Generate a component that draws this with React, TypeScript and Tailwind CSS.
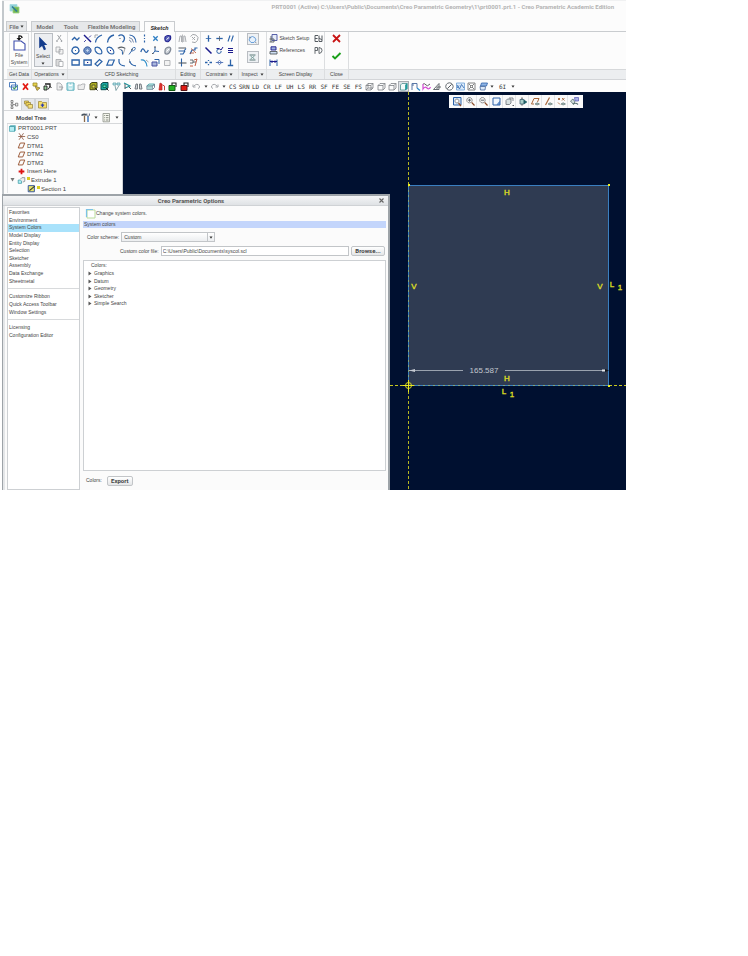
import { useState } from 'react'
import clsx from 'clsx'

// [path, stroke, fill, stroke width]
type Stroke = [string, string, string?, number?]

const B = '#2b62a8'
const N = '#1b1b8c'
const G = '#a3a6aa'
const K = '#555b61'
const T = '#1f8f96'
const O = '#a8663a'

const ICONS: Record<string, Stroke[]> = {
  // sketching
  lineChain: [['M2 7 L4.5 4.5 L7 7 L9.5 4.5', B, 'none', 1.3]],
  centerline: [['M2 2 L9 9', N, 'none', 1.4], ['M9 2.5 L7 4.5 M2 9 L4 7', N, 'none', 0.8]],
  lineTangent: [['M2.5 9.5 Q3 4 9 2', B, 'none', 1.2], ['M2 2 H5 M2 2 V5', G]],
  arc: [['M2.5 9.5 Q3 3.5 9 2', B, 'none', 1.3]],
  arcCenter: [['M2.5 3 Q5 0.8 7.6 3 Q9.8 6 6.5 9.2', B, 'none', 1.3], ['M3 5.5 H5', G]],
  arcConcentric: [['M2.5 2 Q8.5 2.5 9 9.5', B, 'none', 1.1], ['M2 4.5 Q6 5 6.5 9.5 M2 7 Q4 7.5 4.2 9.5', '#6d7fa0', 'none', 0.9]],
  axis: [['M5.5 1.5 V3.5 M5.5 5 V6 M5.5 7.5 V9.5', B, 'none', 1.2]],
  point: [['M3.3 3.3 L7.7 7.7 M7.7 3.3 L3.3 7.7', '#2f7fc4', 'none', 1.3]],
  offset: [['M3 4 Q5 1.5 8.5 3 Q9.5 7 6 8.8 Q2 9 3 4 Z', N, '#5a63b8', 1.1], ['M4.5 6.5 L7 4.5', '#fff']],
  circle: [['M5.5 2 A3.5 3.5 0 1 1 5.4 2 Z', B, 'none', 1.3], ['M5 5.5 H6', B]],
  circleFill: [['M5.5 1.8 A3.7 3.7 0 1 1 5.4 1.8 Z', '#2a4f96', '#6f90c4', 0.9], ['M4 5.5 H7 M5.5 4 V7', '#d4e2f5', 'none', 0.7]],
  ellipse: [['M2.5 2.5 Q6 1 8.3 5 Q10 9 7 9 Q4 9 2.4 6 Q1.5 3.5 2.5 2.5 Z', B, 'none', 1.2]],
  ellipseDot: [['M2.5 2.5 Q6 1 8.3 5 Q10 9 7 9 Q4 9 2.4 6 Q1.5 3.5 2.5 2.5 Z', B, 'none', 1.1], ['M5 5.5 H6', N]],
  fan: [['M1.8 3.2 Q6 0.8 9.2 3.5', K, 'none', 1.1], ['M2.5 3.5 L7 6 M9 3.5 L7 9.5', G], ['M5 4.5 Q7 6 6.5 9.5', B]],
  conic: [['M2 9.5 L4.5 6 Q5 2 8 2.5 Q9.5 5 4.5 6.2', B, 'none', 0.9], ['M6 4 L4 5', K]],
  spline: [['M1.8 7 Q3.5 1.5 5.5 5.5 T9.3 5', B, 'none', 1.3]],
  csys: [['M5 2 V6 M5 6 L9 6.5 M5 6 L2.5 9', B, 'none', 1], ['M4 2 H6 M2 8.5 H3.5', K]],
  ring: [['M3 6 Q3 2.5 7 2 Q9.5 2.5 8.5 5.5 Q7 9.5 4 9 Q2.5 8.5 3 6 Z', '#7e8794', '#cdd2d8', 1.2], ['M4.5 6.5 L7 4', '#fff']],
  rect: [['M2 3 H9.2 V8 H2 Z', B, 'none', 1.3]],
  rectDot: [['M2 3 H9.2 V8 H2 Z', B, 'none', 1.3], ['M5 5.5 H6.2', N]],
  slantRect: [['M2 7 L6.5 2.5 L9 4.5 L4.5 9 Z', B, 'none', 1.2]],
  parallelogram: [['M1.8 8.2 L4 3 H9.3 L7.2 8.2 Z', B, 'none', 1.2]],
  fillet: [['M3 2 V5 Q3.5 8.5 9 9', B, 'none', 1.2]],
  filletDot: [['M2.5 2 V6', G], ['M2.8 4 Q3.5 8.5 9 8.8', B, 'none', 1.2]],
  chamfer: [['M1.8 3 Q7 2 8 9.5', '#2f8ec9', 'none', 1.2], ['M7 3 L9.5 5', G]],
  thicken: [['M2 5 H7 V9 H2 Z', '#46509f', '#a9b6dc'], ['M4.5 2.5 H9 V7', B]],
  palette: [['M2.5 3.5 H8 V8.5 H2.5 Z', G, '#f2f2f2', 0.8]],
  // editing
  mirror: [['M5.5 1.5 V9.5', G, 'none', 0.8], ['M2 9 L3 3 L4.5 3 V9 M9 9 L8 3 H6.8 V9', G, 'none', 0.9]],
  rotate: [['M2.5 3.5 A4 4 0 1 1 4 9', G, 'none', 1], ['M4 4 L7 7 M7 4 L4.5 6.5', G]],
  modify: [['M1.5 3 H9', K, 'none', 1], ['M1.5 6 H7 L9 3.5 M3 9 H6 L8 6', B, 'none', 1.2]],
  trim: [['M2 9 L4 5 H7 V3 H9.5', B, 'none', 1.2], ['M3 3.5 L8 8 M2 8 H6', '#b34a2a', 'none', 0.8]],
  corner: [['M4.5 1.5 V9.5', B, 'none', 1.1], ['M1.5 6 H9.5', K, 'none', 1.1]],
  divide: [['M2 3 H5 V6 H2 M5 5 H8', K, 'none', 0.9], ['M6 3 L9 2 L7 9 M2 9 H5', '#c0492d', 'none', 0.9]],
  // constrain
  cVert: [['M5.5 2.3 V8.7', B, 'none', 1.3], ['M2.8 5.5 H8.2', B, 'none', 0.8]],
  cHoriz: [['M2.3 5.5 H8.7', B, 'none', 1.3], ['M5.5 3 V8', K, 'none', 0.8]],
  cPar: [['M3 8.5 L5 2.5 M6.3 8.5 L8.3 2.5', B, 'none', 1.1]],
  cMid: [['M2.5 2.5 L8.5 8.5', N, 'none', 1.5]],
  cTan: [['M5 4 A2.2 2.2 0 1 0 7.2 6', B, 'none', 1], ['M2.5 3.5 H5 L7 5 L9 2', N, 'none', 1]],
  cEq: [['M3 3.5 H8 M3 5.5 H8 M3 7.5 H8', N, 'none', 1]],
  cSym: [['M2 5.5 H4.5 M6.5 5.5 H9 M5.5 3 V4 M5.5 7 V8.2', B, 'none', 1.3]],
  cCoin: [['M5.5 3.3 L7.7 5.5 L5.5 7.7 L3.3 5.5 Z M1.8 5.5 H9.2', '#4d6fb4', 'none', 0.9]],
  cPerp: [['M5.5 2.5 V8.5 M2.8 8.5 H8.2', B, 'none', 1.3]],
  // clipboard
  cut: [['M3.5 2 L7 7 M7 2 L3.8 7', G, 'none', 1], ['M3 7 V9 M7.5 7 V9', G, 'none', 1.3]],
  copy: [['M2 2 H6 V7 H2 Z M5 4.5 H9 V9 H5 Z', G, '#f3f3f3', 0.8]],
  paste: [['M2 2.5 H7 V9 H2 Z', G, '#dcdcdc', 0.8], ['M5 4.5 H9 V9.5 H5 Z', G, '#fff', 0.8]],
  // screen display
  setup: [['M4 1.5 H9 V7.5 H4 Z', '#46509f', '#e8edf7', 0.9], ['M1.5 6 H6 V9 H1.5 M3 3 V9', K, 'none', 0.9]],
  refs: [['M3 1.8 H8 V5 H3 Z', N, '#9fb0dd', 0.9], ['M2 6.5 H9 V9 H2 Z', K, '#cfe0f5', 0.9]],
  width: [['M2 2.5 V9 M9 2.5 V9', B, 'none', 1], ['M2 4.5 H9 M4 3.5 V6 M7 3.5 V6', N, 'none', 1]],
  feature: [['M2 6 Q2.5 2.5 5.5 2.5 Q8.5 3 9 6 L7 8.5 H4 Z', '#5f98d8', '#e7f1fb', 0.9], ['M2 3 L4 4 M8 8 L9.5 9', K, 'none', 0.6]],
  shade: [['M2.5 3 H8.5 M2.5 8 H8.5', '#5f7d7b', 'none', 1], ['M3.5 4 L7.5 7 M7.5 4 L3.5 7', '#79a09c']],
  ew: [['M2 2.5 H5 M2 5.5 H4.5 M2 8.5 H5 M2 2.5 V8.5', K, 'none', 1], ['M6 2.5 V8.5 H9 V2.5 M6 5 L9 7', K, 'none', 1]],
  pd: [['M2 8.8 V2.5 H4.5 V5.5 H2', K, 'none', 0.9], ['M6 8.5 V2.5 Q9.5 3 9 5.5 Q9 8 6 8.5', K, 'none', 0.9]],
  // quick toolbar
  windows: [['M1.5 1.5 H7.5 V6 H1.5 Z M3.5 4 H9.5 V9 H3.5 Z', '#3f73b8', '#fff', 0.9], ['M5 6.5 L6.3 8 L9 5', '#3a9a50', 'none', 1.1]],
  del: [['M3 2.5 L8 8.8 M8 2.5 L3 8.8', '#e31b12', 'none', 1.8]],
  regen: [['M2 2 H6 V5 H2 Z', '#9b8b2a', '#e8d24a', 0.8], ['M4 5 L9 7 L6 9.5 Z', '#86763c', '#d6b83c', 0.8]],
  refresh: [['M3 3 H8 V6', '#222', 'none', 1.3], ['M2 5 H5 V9 H2 Z', '#1b1b1b', '#9ad09d', 0.9], ['M6 8.5 L8 5.5 L9.5 7', '#222']],
  newDoc: [['M3 2 H6 L8 4 V9 H3 Z', G, '#eee', 0.8], ['M5 6 H9 L7 9', G]],
  save: [['M2 2 H9 V9.2 H2 Z', '#5aaebb', '#bfe7ec', 1], ['M4 2.3 V4.5 H7 V2.3 M4 8 H7', '#fff', 'none', 1]],
  open: [['M2 4 H5 L6 3 H9 L8 8.5 H2 Z', G, '#ededed', 0.8]],
  boxYellow: [['M2 3 L4 1.5 H9 V7 L7 8.7 H2 Z', '#4a4a1a', '#b0b020', 1], ['M4 4 H7 V7 H4 Z', '#443', '#e6e03a', 0.8], ['M7 7 L9.5 9.5', '#222']],
  boxTeal: [['M2 3 L4 1.5 H9 V7 L7 8.7 H2 Z', '#0f4a4a', '#1aa6a6', 1], ['M4 4 H7 V6.5 H4 Z', '#063', '#59d8d0', 0.8], ['M7 7 L9.5 9.5', '#222']],
  tree: [['M2 2 H5 V4 H2 Z M6 2 H9 V4 H6 Z', '#4a9aa5', '#c8eaee', 0.7], ['M4 4.5 L5 9.5 L8 4.5', '#6a8f95', 'none', 0.8]],
  tree2: [['M2 2 L8 5 L3 7', T, 'none', 1.1], ['M3 3 V8 M7 6 L9 8', K]],
  find: [['M2 8 L3 3 H4.5 V8 Z M9 8 L8 3 H6.5 V8 Z', '#6a7076', '#d7dade', 0.9]],
  plate: [['M1.8 5 L4 3 H9.5 L7.5 5 Z', T, '#d7f0ee', 0.7], ['M1.8 5 H7.5 V8.5 H1.8 Z', '#789', '#a8d5d3', 0.7], ['M7.5 5 L9.5 3 V6.5 L7.5 8.5', '#789']],
  redMark: [['M3 9 L4 2 L6 3 V9 Z', '#b9231e', '#e3322b', 0.7], ['M6.5 4 L8.5 5 V9.3', '#c8413a']],
  lockGreen: [['M5 5 V2 H9 V6', '#222', 'none', 1.1], ['M2 4.5 H8 V9.5 H2 Z', '#145a14', '#22b022', 1]],
  lockRed: [['M5 5 V2 H9 V6', '#222', 'none', 1.1], ['M2 4.5 H8 V9.5 H2 Z', '#5a1414', '#e01c14', 1]],
  undo: [['M2.5 5.5 Q6 1.5 8.5 5 Q9 7 7 7.5', G, 'none', 1], ['M2 3.5 V6 H4.5', G]],
  redo: [['M8.5 5.5 Q5 1.5 2.5 5 Q2 7 4 7.5', G, 'none', 1], ['M9 3.5 V6 H6.5', G]],
  cube: [['M2 4.5 L4 2.5 H9 V7 L7 9 H2 Z M2 4.5 H7 V9 M7 4.5 L9 2.5', '#7d8186', '#fbfbfb', 0.8]],
  cubeWire: [['M2 4.5 L4 2.5 H9 V7 L7 9 H2 Z M2 4.5 H7 V9 M7 4.5 L9 2.5 M4 2.5 V7 H9 M4 7 L2 9', '#6d7176', 'none', 0.7]],
  cubeSolid: [['M2.5 4 L4 2.5 H9 V7.5 L7.5 9 H2.5 Z', '#4f8f90', '#f2fbfa', 0.8], ['M7.5 4 L9 2.5 V7.5 L7.5 9 Z', T, '#1aa6a0', 0.7]],
  dims: [['M2 9 V2.5 H7 V7 M2 4 H4', '#46689c', 'none', 0.9], ['M7 7 L10 9.5', '#2b8acb', 'none', 1.3]],
  curve: [['M2 3 Q4 2 5 4 T9 3', '#555', 'none', 0.9], ['M2 3 V8 Q4 5 6 7 T9.5 6', '#d24bd2', 'none', 1.2]],
  angle: [['M1.5 8.5 L7 2.5 V8.5 Z', K, 'none', 0.9], ['M5 8 V6 H9', K, 'none', 0.9]],
  forbid: [['M5.5 1.8 A3.7 3.7 0 1 1 5.4 1.8 Z', K, 'none', 0.9], ['M3.3 7.7 L7.7 3.3', K, 'none', 1]],
  graph: [['M1.5 2 H9.5 V9 H1.5 Z', '#6b9fd6', '#dcebfa', 0.8], ['M2 4 L4.5 8 L6.5 3.5 L9 7 M2 7 L4 4.5', '#3c70b4', 'none', 0.9]],
  grid: [['M2 2 H9 V9 H2 Z', '#666', 'none', 0.8], ['M3 3 L8 8 M8 3 L3 8', '#666', 'none', 0.8], ['M4.5 4.5 H6.5 V6.5 H4.5 Z', '#666', '#fff', 0.7]],
  layers: [['M3.5 2 H9.5 L8.5 5 H2.5 Z', '#2f62a9', '#8fb5e5', 0.8], ['M2 5.5 H7.5 L7 9 H2.5 Z', '#46689c', '#dbe8f7', 0.8]],
  // view toolbar
  refit: [['M1.5 1.5 H9 V9 H1.5 Z', B, '#d9e8fa', 1], ['M5 3 A2 2 0 1 1 4.9 3 Z', '#777', '#fff', 0.8], ['M6.5 7 L9 10', '#8a4b28', 'none', 1.2]],
  zoomIn: [['M4.5 1.5 A2.7 2.7 0 1 1 4.4 1.5 Z', '#777', '#f4f4f4', 0.8], ['M3 4.2 H6 M4.5 2.8 V5.7', K, 'none', 0.9], ['M6.6 6.4 L9.5 9.5', '#8a4b28', 'none', 1.2]],
  zoomOut: [['M4.5 1.5 A2.7 2.7 0 1 1 4.4 1.5 Z', '#777', '#f4f4f4', 0.8], ['M3 4.2 H6', K, 'none', 0.9], ['M6.6 6.4 L9.5 9.5', '#8a4b28', 'none', 1.2]],
  repaint: [['M2 2 H9 V9 H2 Z', '#2f62a9', '#f2f8fe', 1], ['M6 8.5 L8.5 5.5 V8.5 Z', '#2f62a9', '#6a9bda', 0.5]],
  style: [['M2 4.5 L3.5 3 H7 V7 L5.5 8.5 H2 Z', '#6a7076', '#d9e2e2', 0.8], ['M5 2 H9 V5', '#6a7076', 'none', 0.8], ['M8.5 9.5 H10', K]],
  views: [['M5 1.5 V9.5', '#333', 'none', 1], ['M3 3.5 H7 V8 H3 Z', '#467', '#a9cfc9', 0.8], ['M7 4 L10 6 L7 8 Z', '#1d5f66', '#1d5f66', 0.5]],
  planeOff: [['M1.5 8 L4 2.5 H9 L7.5 6 M1.5 8 H4', O, 'none', 1], ['M5 8 Q7 5.5 9.5 8 Q7 10 5 8 Z', '#5d7473', '#9fb3b0', 0.6]],
  axisOff: [['M2.5 9 L6.5 1.5', O, 'none', 1.2], ['M5 8 Q7 5.5 9.5 8 Q7 10 5 8 Z', '#5d7473', '#9fb3b0', 0.6]],
  pointOff: [['M2 2 L4 4 M4 2 L2 4 M6 2 L8.5 4.5 M8.5 2 L6 4.5 M2 6.5 L4 8.5', O, 'none', 0.9], ['M5 8 Q7 5.5 9.5 8 Q7 10 5 8 Z', '#5d7473', '#9fb3b0', 0.6]],
  csysOff: [['M1.5 5 L4 3 L6 6 L4 8 Z', '#5d7473', '#cfdcda', 0.8], ['M5.5 1.5 H9.5 V5 H6 Z', '#5457b0', '#a9aee6', 0.7], ['M4 8.5 Q6.5 6 9 8.5', '#5d7473', 'none', 1.1]],
  // model tree
  treeTab: [['M2 1.5 H4 V3.5 H2 Z M2 4.7 H4 V6.5 H2 Z M2 7.7 H4 V9.5 H2 Z', '#666', '#eee', 0.7], ['M6.5 4.2 H8.8 V7 H6.5 Z M4 5.6 H6', '#666', '#eee', 0.7]],
  folders: [['M1.5 2 H5.5 V5 H1.5 Z', '#94803a', '#f1d659', 0.7], ['M3 3.5 H7.5 V7 H3 Z', '#94803a', '#f1d659', 0.7], ['M5 5.5 H9.5 V9.2 H5 Z', '#94803a', '#f6e17a', 0.7]],
  favorites: [['M1.5 2.5 H4.5 L5.5 3.5 H9.5 V9 H1.5 Z', '#a18a3a', '#f5df6a', 0.8], ['M5.5 4.5 V8 M3.8 6.2 H7.2', '#2f3fae', 'none', 1.3]],
  tools: [['M4.5 3.5 V10', '#8a6a4a', 'none', 1.3], ['M1.5 3.5 Q4 1.5 6.5 3', '#4a5560', 'none', 1.6], ['M8 4.5 V10', '#3f78c2', 'none', 1.5], ['M6.8 1.5 V3.5 L8 4.5 L9.4 3.5 V1.5', '#5d6a80', 'none', 1]],
  listDoc: [['M2 1.5 H8.5 V9.8 H2 Z', '#8b8f86', '#f6f7ee', 0.8], ['M3.2 3.5 H4.2 M5 3.5 H7.5 M3.2 5.7 H4.2 M5 5.7 H7.5 M3.2 8 H4.2 M5 8 H7.5', '#6c7068', 'none', 0.8]],
  part: [['M1.8 3 L3 2 H9 V8 L8 9 H1.8 Z', '#4ba7b1', '#b3ecf2', 0.9], ['M8 3 V9 M1.8 3 H8', '#2b8a95', 'none', 0.9]],
  csTree: [['M2.5 1.5 L8 9.5 M8 1.5 L2.5 9.5 M1.5 5.5 H10', '#8c5640', 'none', 1]],
  plane: [['M1.5 8.5 L4 2.5 H9.5 L7 8.5 Z', '#9b5a38', 'none', 1.2]],
  insert: [['M5.5 2 V9 M2 5.5 H9', '#dd1414', 'none', 2.2]],
  extrude: [['M1.5 5 H5.5 V9 H1.5 Z', '#3b9aa3', '#b3ecf2', 0.9], ['M4 4 L6 2 H9.5 V6.5 L7 7.5', '#66727a', '#eee', 0.8]],
  section: [['M1.5 2 H9 V9.5 H1.5 Z', '#274a9c', '#e8e46a', 1.1], ['M3 8 L9.5 2.5', '#333', 'none', 1.3]],
  // dialog
  swatch: [['M2 2 H10 V10 H2 Z', '#b9dc9b', '#fff', 1], ['M1.5 9 V1.5 H8', '#7cc2e6', 'none', 1.2]],
  logo: [['M1 1.5 H8 V8 H1 Z', '#a6dbe0', '#8fd0d8', 0.8], ['M4 4 H10 V10 H4 Z', '#9ed08c', '#72b84e', 0.8], ['M3 3.5 L8 8.5', '#2d7a9a', 'none', 1.6]],
}

function Icon({ name, className = 'w-[11px] h-[11px]' }: { name: string; className?: string }) {
  return (
    <svg viewBox="0 0 11 11" className={clsx('block shrink-0', className)} aria-hidden="true">
      {ICONS[name].map(([d, stroke, fill, w], i) => (
        <path key={i} d={d} stroke={stroke} fill={fill ?? 'none'} strokeWidth={w ?? 1} />
      ))}
    </svg>
  )
}

function IconButton({ name, className }: { name: string; className?: string }) {
  return (
    <button aria-label={name} className={clsx('flex items-center justify-center', className)}>
      <Icon name={name} />
    </button>
  )
}

function Caret() {
  return (
    <svg viewBox="0 0 4 3" className="block w-1 h-[3px] shrink-0" aria-hidden="true">
      <path d="M0.5 0.5 H3.5 L2 2.7 Z" fill="#333" />
    </svg>
  )
}

const CFD = [
  'lineChain', 'centerline', 'lineTangent', 'arc', 'arcCenter', 'arcConcentric', 'axis', 'point', 'offset',
  'circle', 'circleFill', 'ellipse', 'ellipseDot', 'fan', 'conic', 'spline', 'csys', 'ring',
  'rect', 'rectDot', 'slantRect', 'parallelogram', 'fillet', 'filletDot', 'chamfer', 'thicken', 'palette',
]
const EDITING = ['mirror', 'rotate', 'modify', 'trim', 'corner', 'divide']
const CONSTRAIN = ['cVert', 'cHoriz', 'cPar', 'cMid', 'cTan', 'cEq', 'cSym', 'cCoin', 'cPerp']
const QUICK = [
  'windows', 'del', 'regen', 'refresh', 'newDoc', 'save', 'open', 'boxYellow',
  'boxTeal', 'tree', 'tree2', 'find', 'plate', 'redMark', 'lockGreen', 'lockRed',
]
const VIEW_KEYS = ['CS', 'SRN', 'LD', 'CR', 'LF', 'UH', 'LS', 'RR', 'SF', 'FE', 'SE', 'FS']
const DISPLAY = ['cubeWire', 'cube', 'cube', 'cubeSolid', 'dims', 'curve', 'angle', 'forbid', 'graph', 'grid', 'layers']
const GRAPHICS_BAR = ['refit', 'zoomIn', 'zoomOut', 'repaint', 'style', 'views', 'planeOff', 'axisOff', 'pointOff', 'csysOff']

const OPTION_GROUPS = [
  {
    items: ['Favorites', 'Environment', 'System Colors', 'Model Display', 'Entity Display', 'Selection', 'Sketcher', 'Assembly', 'Data Exchange', 'Sheetmetal'],
    height: 'h-[76px]',
  },
  { items: ['Customize Ribbon', 'Quick Access Toolbar', 'Window Settings'], height: 'h-[23px]' },
  { items: ['Licensing', 'Configuration Editor'], height: 'h-[15px]' },
]

const TREE = [
  { icon: 'part', label: 'PRT0001.PRT', indent: 'pl-0' },
  { icon: 'csTree', label: 'CS0', indent: 'pl-[9px]' },
  { icon: 'plane', label: 'DTM1', indent: 'pl-[9px]' },
  { icon: 'plane', label: 'DTM2', indent: 'pl-[9px]' },
  { icon: 'plane', label: 'DTM3', indent: 'pl-[9px]' },
  { icon: 'insert', label: 'Insert Here', indent: 'pl-[9px]' },
  { icon: 'extrude', label: 'Extrude 1', indent: 'pl-[2px]', open: true, mark: true },
  { icon: 'section', label: 'Section 1', indent: 'pl-[19px]', mark: true },
]

function RibbonGroup({ label, width, menu, children }: { label: string; width: string; menu?: boolean; children: React.ReactNode }) {
  return (
    <section className={clsx('flex flex-col shrink-0 border-r border-[#dcdee0]', width)}>
      <div className="h-[37px] flex justify-center items-start pt-px">{children}</div>
      <div className="h-[10px] bg-[#eceef0] border-t border-[#e2e4e6] flex items-center justify-center gap-[2px] whitespace-nowrap">
        {label}
        {menu && <Caret />}
      </div>
    </section>
  )
}

function Ribbon() {
  return (
    <div className="flex border-t border-[#c9cccf] bg-[#fcfcfc] pl-[3px]">
      <RibbonGroup label="Get Data" width="w-[25px]">
        <button className="w-[20px] h-[34px] border border-[#dcdee0] flex flex-col items-center leading-[7px]">
          <svg viewBox="0 0 16 18" className="w-4 h-[18px] shrink-0">
            <path d="M3 7 H10 L14 10 V16 H3 Z" fill="#fff" stroke="#3f4fae" strokeWidth="1.1" />
            <path d="M11 4 Q11 1.5 8 2 V5" fill="none" stroke="#111" strokeWidth="1.4" />
            <path d="M5.5 4 H10.5 L8 6.8 Z" fill="#111" />
          </svg>
          File<br />System
        </button>
      </RibbonGroup>
      <RibbonGroup label="Operations" width="w-[36px]" menu>
        <button className="w-[19px] h-[34px] border border-[#b9bdc2] bg-[#eceef1] flex flex-col items-center leading-[7px]">
          <svg viewBox="0 0 14 20" className="w-[14px] h-[19px] shrink-0">
            <path d="M3 3 L11.5 11.5 H8.3 L10.2 16 L8 17 L6 12.5 L3 15 Z" fill="#143c8c" />
          </svg>
          Select
          <span className="pt-[2px]"><Caret /></span>
        </button>
        <div className="flex flex-col gap-px">
          {['cut', 'copy', 'paste'].map(n => <IconButton key={n} name={n} className="w-[13px] h-[11px]" />)}
        </div>
      </RibbonGroup>
      <RibbonGroup label="CFD Sketching" width="w-[108px]">
        <div className="grid grid-cols-9 w-[103px] gap-y-px">
          {CFD.map(n => <IconButton key={n} name={n} />)}
        </div>
      </RibbonGroup>
      <RibbonGroup label="Editing" width="w-[25px]">
        <div className="grid grid-cols-2 w-[23px] gap-y-px">
          {EDITING.map(n => <IconButton key={n} name={n} />)}
        </div>
      </RibbonGroup>
      <RibbonGroup label="Constrain" width="w-[38px]" menu>
        <div className="grid grid-cols-3 w-[34px] gap-y-px">
          {CONSTRAIN.map(n => <IconButton key={n} name={n} />)}
        </div>
      </RibbonGroup>
      <RibbonGroup label="Inspect" width="w-[28px]" menu>
        <div className="flex flex-col gap-[6px]">
          <IconButton name="feature" className="w-[12px] h-[12px] border border-[#b9bdc2] bg-[#eef1f4]" />
          <IconButton name="shade" className="w-[12px] h-[12px] border border-[#b9bdc2] bg-[#eef1f4]" />
        </div>
      </RibbonGroup>
      <RibbonGroup label="Screen Display" width="w-[58px]">
        <div className="w-[56px] flex flex-col gap-px">
          <div className="flex items-center">
            <button className="flex-1 flex items-center gap-px whitespace-nowrap"><Icon name="setup" />Sketch Setup</button>
            <IconButton name="ew" />
          </div>
          <div className="flex items-center">
            <button className="flex-1 flex items-center gap-px"><Icon name="refs" />References</button>
            <IconButton name="pd" />
          </div>
          <IconButton name="width" className="w-[11px]" />
        </div>
      </RibbonGroup>
      <RibbonGroup label="Close" width="w-[24px]">
        <div className="flex flex-col gap-[6px]">
          <button aria-label="Cancel">
            <svg viewBox="0 0 11 11" className="block w-[11px] h-[11px]"><path d="M2 2 L9 9 M9 2 L2 9" stroke="#c81414" strokeWidth="1.8" /></svg>
          </button>
          <button aria-label="OK">
            <svg viewBox="0 0 11 11" className="block w-[11px] h-[11px]"><path d="M1.5 6 L4 8.5 L9.5 3" fill="none" stroke="#1aa01a" strokeWidth="1.9" /></svg>
          </button>
        </div>
      </RibbonGroup>
      <div className="flex-1 flex flex-col justify-end">
        <div className="h-[10px] bg-[#eceef0] border-t border-[#d6d8da]" />
      </div>
    </div>
  )
}

function QuickToolbar() {
  return (
    <div className="h-[13px] flex items-center bg-[#fdfdfd] border-t border-[#d3d5d8] pl-[4px]">
      <div className="grid grid-cols-16 w-[182px]">
        {QUICK.map(n => <IconButton key={n} name={n} />)}
      </div>
      <div className="flex items-center justify-around w-[37px]">
        <IconButton name="undo" />
        <Caret />
        <IconButton name="redo" />
        <Caret />
      </div>
      <div className="grid grid-cols-12 w-[137px] font-['DejaVu_Sans_Mono',monospace] text-[6px] text-[#333]">
        {VIEW_KEYS.map(k => (
          <button key={k} className="flex justify-center">{k}</button>
        ))}
      </div>
      <div className="grid grid-cols-11 w-[125px]">
        {DISPLAY.map((n, i) => (
          <IconButton key={i} name={n} className={n === 'cubeSolid' ? 'bg-[#dfe3e7] outline outline-[#a9adb2] -outline-offset-1' : ''} />
        ))}
      </div>
      <div className="flex items-center gap-[5px] pl-px font-['DejaVu_Sans_Mono',monospace] text-[6px] text-[#333]">
        <Caret />
        <button>6I</button>
        <Caret />
      </div>
    </div>
  )
}

function ModelTree() {
  return (
    <aside className="w-[119px] shrink-0 bg-[#fcfcfc] border-r border-[#d0d3d6] pt-[6px] text-[6px]">
      <div className="flex h-[13px] border-b border-[#d6d8da] pl-[3px]">
        <IconButton name="treeTab" className="w-[14px]" />
        <IconButton name="folders" className="w-[14px] border border-b-0 border-[#d0d3d6] bg-[#e6e8ea]" />
        <IconButton name="favorites" className="w-[14px] border border-b-0 border-[#d0d3d6] bg-[#e6e8ea]" />
      </div>
      <div className="flex items-center h-[13px] border-b border-[#d6d8da] ml-[3px] pl-[9px] pr-[3px] gap-[3px]">
        <h2 className="flex-1 font-['Roboto',sans-serif] font-bold whitespace-nowrap text-[#555]">Model Tree</h2>
        <IconButton name="tools" />
        <Caret />
        <IconButton name="listDoc" />
        <Caret />
      </div>
      <ul className="grid grid-rows-8 h-[69px] ml-[3px] border-l border-[#e2e4e6]">
        {TREE.map(row => (
          <li key={row.label} className={clsx('flex items-center whitespace-nowrap leading-[8px]', row.indent)}>
            {row.open && (
              <svg viewBox="0 0 5 4" className="w-[5px] h-1 mr-[2px]"><path d="M0.5 0 H4.5 L2.5 3.5 Z" fill="#777" /></svg>
            )}
            <Icon name={row.icon} className="w-[9px] h-[9px]" />
            {row.mark && <i className="w-[3px] h-[3px] mb-[3px] ml-px bg-[#d8cc20]" />}
            <span className="pl-px">{row.label}</span>
          </li>
        ))}
      </ul>
    </aside>
  )
}

function Viewport() {
  return (
    <div className="relative flex-1 min-w-0 bg-[#001030]">
      <svg viewBox="0 0 503 398" preserveAspectRatio="xMaxYMin slice" className="block w-full h-[398px]">
        <rect x="285.5" y="93.5" width="200" height="200" fill="#2f3b52" stroke="#3a7fc0" />
        <path d="M285.5 0 V93 M285.5 294 V398" stroke="#b8b820" strokeDasharray="3 2" />
        <path d="M267 293.5 H285 M486 293.5 H503" stroke="#c8c820" strokeDasharray="3 2" />
        <path d="M285.5 93 V293.5 H486" fill="none" stroke="#a4b860" strokeDasharray="2 3" opacity="0.7" />
        <g fill="#f0f020">
          <rect x="285" y="92" width="2" height="2" />
          <rect x="485" y="92" width="2" height="2" />
          <rect x="485" y="293" width="2" height="2" />
        </g>
        <circle cx="285.5" cy="293.5" r="3" fill="none" stroke="#d8d820" />
        <path d="M280 293.5 H291 M285.5 288 V300" stroke="#e8e820" />
        <path d="M286 278.5 H340 M382 278.5 H485" stroke="#9aa2ae" />
        <path d="M286 278.5 L292 277 V280 Z" fill="#c6cad2" />
        <path d="M479 278.5 H482" stroke="#e6e8ec" strokeWidth="2" />
        <path d="M486 278.5 L482 277 V280 Z" fill="#11151c" />
        <text x="361" y="281" fontSize="8" textAnchor="middle" fill="#c3c7ce">165.587</text>
        <g fill="#e0e020" fontSize="8" textAnchor="middle" stroke="#e0e020" strokeWidth="0.3">
          <text x="384" y="103">H</text>
          <text x="384" y="289">H</text>
          <text x="291" y="197">V</text>
          <text x="477" y="197">V</text>
          <text x="489" y="195">L</text>
          <text x="497" y="198">1</text>
          <text x="381" y="302">L</text>
          <text x="389" y="305">1</text>
        </g>
      </svg>
      <div className="absolute top-[3px] right-[43px] flex h-[13px] bg-[#fafafa] px-[2px] divide-x divide-[#e2e4e6]">
        {GRAPHICS_BAR.map(n => <IconButton key={n} name={n} className="w-[13px]" />)}
      </div>
    </div>
  )
}

function OptionsDialog() {
  const [page, setPage] = useState('System Colors')
  const [file, setFile] = useState('C:\\Users\\Public\\Documents\\syscol.scl')

  return (
    <div
      role="dialog"
      aria-label="Creo Parametric Options"
      className="absolute left-0 top-[102px] bottom-0 w-[388px] flex flex-col bg-[#fbfbfb] border-t-2 border-r-2 border-l border-[#9da3a8] text-[5px] leading-[7px]"
    >
      <header className="flex items-center h-[10px] bg-linear-to-b from-[#f4f5f6] to-[#dfe2e5] border-b border-[#cfd2d5] pr-[4px]">
        <h1 className="flex-1 text-center font-['Roboto',sans-serif] text-[6px] font-bold text-[#555]">Creo Parametric Options</h1>
        <button aria-label="Close" className="w-[5px]">
          <svg viewBox="0 0 5 5" className="block w-[5px] h-[5px]"><path d="M0.5 0.5 L4.5 4.5 M4.5 0.5 L0.5 4.5" stroke="#666" strokeWidth="1.1" /></svg>
        </button>
      </header>
      <div className="flex flex-1 min-h-0 border-l-2 border-[#e4e6e8] pl-[2px] pr-px">
        <nav className="w-[73px] shrink-0 bg-white border border-[#cdd0d3] mt-px pt-px">
          {OPTION_GROUPS.map((group, i) => (
            <ul key={i} className={clsx('grid', group.height, i > 0 && 'mt-[3px] pt-[4px] box-content border-t border-[#d8dadc]')}>
              {group.items.map(item => (
                <li key={item} className="flex">
                  <button
                    onClick={() => setPage(item)}
                    className={clsx('w-full text-left pl-px whitespace-nowrap', page === item && 'bg-[#a9e2fb]')}
                  >
                    {item}
                  </button>
                </li>
              ))}
            </ul>
          ))}
        </nav>
        <main className="flex-1 flex flex-col min-w-0 pl-[3px] pr-px">
          <div className="flex items-center h-[15px] pl-[2px]">
            <Icon name="swatch" />
            Change system colors.
          </div>
          <h2 className="h-[7px] bg-[#c3d5fb] pl-px">System colors</h2>
          <div className="flex items-center gap-[2px] mt-[4px] pl-[4px]">
            <label htmlFor="scheme">Color scheme:</label>
            <div className="relative w-[94px]">
              <select id="scheme" className="block appearance-none w-full h-[10px] border border-[#c2c5c8] bg-linear-to-b from-white to-[#eceef0] pl-[2px] leading-[8px]">
                <option>Custom</option>
              </select>
              <span className="absolute right-px top-px h-2 w-[7px] border-l border-[#c2c5c8] flex items-center justify-center pointer-events-none"><Caret /></span>
            </div>
          </div>
          <div className="flex items-center gap-[2px] mt-[4px] pl-[37px] pr-px">
            <label htmlFor="file" className="whitespace-nowrap">Custom color file:</label>
            <input id="file" value={file} onChange={e => setFile(e.target.value)} className="flex-1 min-w-0 h-[10px] border border-[#c2c5c8] bg-white pl-px" />
            <button className="w-[34px] h-[10px] rounded-xs border border-[#c2c5c8] bg-linear-to-b from-white to-[#e4e6e8] font-['Roboto',sans-serif] text-[6px] font-bold leading-[8px]">Browse...</button>
          </div>
          <div className="flex-1 mt-[4px] bg-white border border-[#cdd0d3] pl-[4px] pt-px">
            <p className="pl-[3px]">Colors:</p>
            <ul className="grid h-[38px] mt-px">
              {['Graphics', 'Datum', 'Geometry', 'Sketcher', 'Simple Search'].map(c => (
                <li key={c}>
                  <button className="flex items-center gap-[2px]">
                    <svg viewBox="0 0 4 5" className="w-1 h-[5px]"><path d="M0.5 0.5 L3.5 2.5 L0.5 4.5 Z" fill="#555" /></svg>
                    {c}
                  </button>
                </li>
              ))}
            </ul>
          </div>
          <div className="flex items-center gap-[5px] h-[19px] pl-[3px]">
            Colors:
            <button className="w-[26px] h-[10px] rounded-xs border border-[#c2c5c8] bg-linear-to-b from-white to-[#e4e6e8] font-['Roboto',sans-serif] text-[6px] font-bold leading-[8px]">Export</button>
          </div>
        </main>
      </div>
    </div>
  )
}

function App() {
  return (
    <div className="min-h-screen bg-white pl-[2px]">
      <div className="w-full max-w-[624px] border-t border-[#f0f1f2] font-['Liberation_Sans',Arial,sans-serif] text-[5px] leading-[7px] text-[#444]">
        <div className="border-l-2 border-[#c3c8cc] bg-[#fcfcfc]">
          <div className="flex items-start justify-between h-[19px] pl-[5px] pr-[12px] pt-[2px]">
            <Icon name="logo" />
            <h1 className="font-['Roboto',sans-serif] font-bold text-[#b4b4b4] text-[6px] whitespace-nowrap">
              PRT0001 (Active) C:\Users\Public\Documents\Creo Parametric Geometry\1\prt0001.prt.1 - Creo Parametric Academic Edition
            </h1>
          </div>
          <nav className="flex items-end h-[11px] pl-[2px] font-['Roboto',sans-serif] text-[6px] font-bold text-[#777]">
            <button className="h-[10px] w-[21px] border border-b-0 border-[#c9cccf] bg-[#e6e8ea] flex items-center justify-center gap-px">File<Caret /></button>
            <div className="flex items-center h-[10px] mx-[4px] border border-b-0 border-[#c9cccf] bg-[#e6e8ea]">
              <button className="w-[26px]">Model</button>
              <button className="w-[26px]">Tools</button>
              <button className="w-[55px] whitespace-nowrap">Flexible Modeling</button>
            </div>
            <button className="h-[11px] w-[31px] -mb-px border border-b-0 border-[#c9cccf] bg-[#fcfcfc] italic text-[#333] relative">Sketch</button>
          </nav>
          <Ribbon />
          <QuickToolbar />
        </div>
        <div className="relative flex">
          <div className="flex border-l-2 border-[#c3c8cc] w-[121px] shrink-0">
            <ModelTree />
          </div>
          <Viewport />
          <OptionsDialog />
        </div>
      </div>
    </div>
  )
}

export default App
